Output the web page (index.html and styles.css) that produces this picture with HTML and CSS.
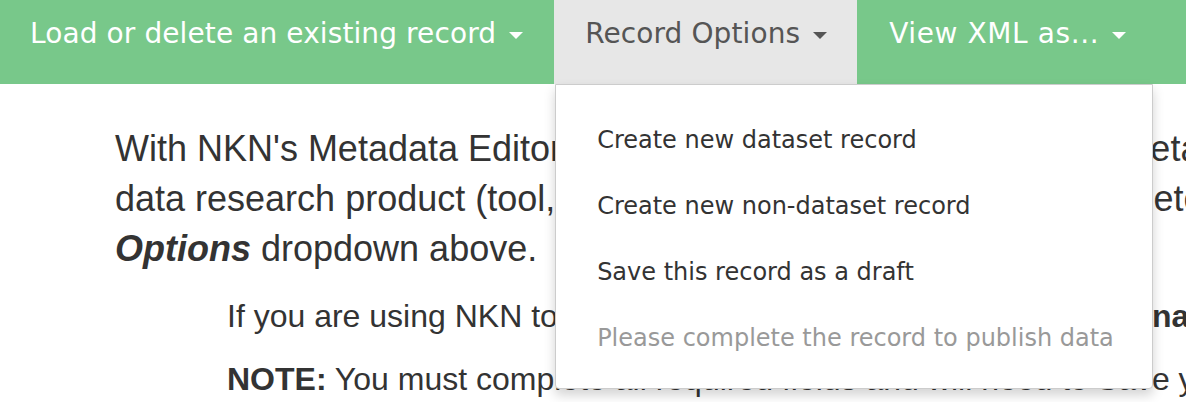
FILE: index.html
```
<!DOCTYPE html>
<html lang="en">
<head>
<meta charset="utf-8">
<title>NKN Metadata Editor</title>
<link rel="stylesheet" href="styles.css">
</head>
<body>
<nav class="navbar">
  <div class="nav-item"><span class="nav-label">Load or delete an existing record</span><span class="caret"></span></div>
  <div class="nav-item active"><span class="nav-label">Record Options</span><span class="caret"></span>
    <ul class="dropdown">
      <li class="dropdown-item">Create new dataset record</li>
      <li class="dropdown-item">Create new non-dataset record</li>
      <li class="dropdown-item">Save this record as a draft</li>
      <li class="dropdown-item disabled">Please complete the record to publish data</li>
    </ul>
  </div>
  <div class="nav-item last"><span class="nav-label">View XML as...</span><span class="caret"></span></div>
</nav>
<main class="content">
  <p class="lead">With NKN's Metadata Editor, you can create and edit your own metadata for a dataset or a non-<br>data research product (tool, model, software, etc). You can complete the <b><i>Record</i></b><br><b><i>Options</i></b> dropdown above.</p>
  <div class="notes">
    <p class="note">If you are using NKN to submit your data please see the <b>Data Management</b> guide.</p>
    <p class="note"><b>NOTE:</b> You must complete all required fields and will need to Save your record.</p>
  </div>
</main>
</body>
</html>
```
FILE: styles.css
```
html, body {
  margin: 0;
  padding: 0;
  background: #ffffff;
}
body {
  width: 1186px;
  height: 402px;
  overflow: hidden;
  font-family: "Liberation Sans", Arial, sans-serif;
  color: #333333;
}
.navbar {
  display: flex;
  height: 84px;
  background: #78c88a;
  font-family: "DejaVu Sans", Verdana, sans-serif;
  font-size: 28px;
  line-height: 1.2;
  letter-spacing: 0.1px;
  position: relative;
  z-index: 2;
}
.nav-item {
  position: relative;
  box-sizing: border-box;
  height: 84px;
  padding: 17px 31px 0 30px;
  color: #ffffff;
  white-space: nowrap;
}
.nav-item.active {
  background: #e7e7e7;
  color: #555555;
  padding-left: 31px;
  padding-right: 30px;
}
.nav-item.last {
  padding-left: 32px;
}
.nav-item.last .nav-label {
  letter-spacing: 0.6px;
}
.caret {
  display: inline-block;
  width: 0;
  height: 0;
  margin-left: 13px;
  vertical-align: middle;
  border-top: 7px solid currentColor;
  border-left: 7.5px solid transparent;
  border-right: 7.5px solid transparent;
}
.dropdown {
  position: absolute;
  top: 84px;
  left: 1px;
  box-sizing: border-box;
  width: 598px;
  margin: 0;
  padding: 22px 0 17px;
  list-style: none;
  background: #ffffff;
  border: 1px solid #cccccc;
  border-radius: 0 0 4px 4px;
  box-shadow: 0 6px 12px rgba(0, 0, 0, 0.175);
  font-size: 24px;
  letter-spacing: 0;
}
.dropdown-item {
  height: 66px;
  line-height: 66px;
  padding: 0 41px;
  color: #333333;
}
.dropdown-item.disabled {
  color: #999999;
}
.content {
  padding-top: 40px;
}
.lead {
  margin: 0 0 20px 115px;
  font-size: 36px;
  line-height: 50px;
  white-space: nowrap;
}
.notes {
  margin-left: 227px;
}
.note {
  margin: 0 0 18px;
  font-size: 32px;
  line-height: 45px;
  white-space: nowrap;
}
```
